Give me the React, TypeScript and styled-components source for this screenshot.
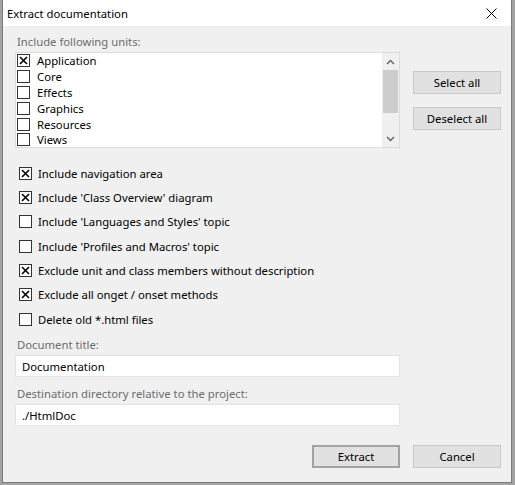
import styled, { createGlobalStyle } from "styled-components";

type CheckProps = { checked: boolean };

const units = [
  { name: "Application", checked: true },
  { name: "Core", checked: false },
  { name: "Effects", checked: false },
  { name: "Graphics", checked: false },
  { name: "Resources", checked: false },
  { name: "Views", checked: false },
];

const options = [
  { label: "Include navigation area", checked: true },
  { label: "Include 'Class Overview' diagram", checked: true },
  { label: "Include 'Languages and Styles' topic", checked: false },
  { label: "Include 'Profiles and Macros' topic", checked: false },
  { label: "Exclude unit and class members without description", checked: true },
  { label: "Exclude all onget / onset methods", checked: true },
  { label: "Delete old *.html files", checked: false },
];

const GlobalStyle = createGlobalStyle`
  html, body {
    margin: 0;
    padding: 0;
    background: #a3a3a3;
  }
  body {
    font-family: "Noto Sans", "Open Sans", sans-serif;
    font-size: 11.3px;
    color: #000;
  }
`;

const Window = styled.div`
  display: flex;
  flex-direction: column;
  width: 510px;
  height: 483px;
  margin-left: 2px;
  box-sizing: border-box;
  border: 1px solid #7c7c7c;
  border-top: none;
  background: #f0f0f0;
`;

const TitleBar = styled.div`
  display: flex;
  align-items: center;
  justify-content: space-between;
  height: 26px;
  padding-left: 4px;
  background: #fff;
`;

const Title = styled.span`
  font-size: 11.3px;
`;

const CloseButton = styled.div`
  display: flex;
  align-items: center;
  justify-content: center;
  width: 46px;
  height: 26px;
  margin-right: -3px;
`;

const Body = styled.div`
  display: flex;
  flex-direction: column;
  flex: 1;
  padding: 8px 10px 0 12px;
`;

const FieldLabel = styled.div<{ $top?: number }>`
  height: 16px;
  line-height: 16px;
  padding-left: 2px;
  margin-top: ${({ $top }) => $top ?? 0}px;
  margin-bottom: 2px;
  color: #6d6d6d;
`;

const TopRow = styled.div`
  display: flex;
  gap: 13px;
`;

const ListBox = styled.div`
  display: flex;
  width: 385px;
  height: 96px;
  box-sizing: border-box;
  border: 1px solid #dcdcdc;
  background: #fff;
  overflow: hidden;
`;

const ListItems = styled.div`
  flex: 1;
  padding: 0 0 0 1px;
`;

const ListRow = styled.div`
  display: flex;
  align-items: center;
  gap: 7px;
  height: 15.8px;
`;

const ScrollBar = styled.div`
  display: flex;
  flex-direction: column;
  width: 17px;
  background: #f0f0f0;
`;

const ScrollArrow = styled.div`
  display: flex;
  align-items: center;
  justify-content: center;
  height: 17px;
`;

const ScrollTrack = styled.div`
  flex: 1;
`;

const ScrollThumb = styled.div`
  height: 43px;
  margin: 0 1px;
  background: #cdcdcd;
`;

const ButtonColumn = styled.div`
  display: flex;
  flex-direction: column;
  gap: 13px;
  padding-top: 19px;
`;

const Button = styled.div<{ $default?: boolean }>`
  display: flex;
  align-items: center;
  justify-content: center;
  width: 88px;
  height: 23px;
  box-sizing: border-box;
  background: #e1e1e1;
  border: ${({ $default }) => ($default ? "2px solid #a2a2a2" : "1px solid #c8c8c8")};
`;

const Options = styled.div`
  display: flex;
  flex-direction: column;
  gap: 8.4px;
  margin-top: 17px;
  padding-left: 4px;
`;

const OptionRow = styled.div`
  display: flex;
  align-items: center;
  gap: 6px;
  height: 16px;
`;

const Box = styled.div<CheckProps>`
  display: flex;
  align-items: center;
  justify-content: center;
  width: 13px;
  height: 13px;
  box-sizing: border-box;
  border: 1px solid #333;
  background: #fff;
  flex-shrink: 0;
`;

const TextInput = styled.div`
  display: flex;
  align-items: center;
  width: 385px;
  height: 22px;
  box-sizing: border-box;
  padding-left: 6px;
  border: 1px solid #e3e3e3;
  background: #fff;
`;

const Footer = styled.div`
  display: flex;
  justify-content: flex-end;
  gap: 13px;
  margin-top: 19px;
`;

function CheckBox({ checked }: CheckProps) {
  return (
    <Box checked={checked}>
      {checked && (
        <svg width="9" height="9" viewBox="0 0 9 9">
          <path d="M1 1 L8 8 M8 1 L1 8" stroke="#000" strokeWidth="1.6" />
        </svg>
      )}
    </Box>
  );
}

function Chevron({ up }: { up: boolean }) {
  return (
    <svg width="9" height="6" viewBox="0 0 9 6">
      <path
        d={up ? "M1 5 L4.5 1.5 L8 5" : "M1 1 L4.5 4.5 L8 1"}
        stroke="#606060"
        strokeWidth="1.4"
        fill="none"
      />
    </svg>
  );
}

export default function App() {
  return (
    <>
      <GlobalStyle />
      <Window>
        <TitleBar>
          <Title>Extract documentation</Title>
          <CloseButton>
            <svg width="11" height="11" viewBox="0 0 11 11">
              <path d="M0.5 0.5 L10.5 10.5 M10.5 0.5 L0.5 10.5" stroke="#000" strokeWidth="1" />
            </svg>
          </CloseButton>
        </TitleBar>
        <Body>
          <FieldLabel>Include following units:</FieldLabel>
          <TopRow>
            <ListBox>
              <ListItems>
                {units.map((u) => (
                  <ListRow key={u.name}>
                    <CheckBox checked={u.checked} />
                    <span>{u.name}</span>
                  </ListRow>
                ))}
              </ListItems>
              <ScrollBar>
                <ScrollArrow>
                  <Chevron up />
                </ScrollArrow>
                <ScrollTrack>
                  <ScrollThumb />
                </ScrollTrack>
                <ScrollArrow>
                  <Chevron up={false} />
                </ScrollArrow>
              </ScrollBar>
            </ListBox>
            <ButtonColumn>
              <Button>Select all</Button>
              <Button>Deselect all</Button>
            </ButtonColumn>
          </TopRow>
          <Options>
            {options.map((o) => (
              <OptionRow key={o.label}>
                <CheckBox checked={o.checked} />
                <span>{o.label}</span>
              </OptionRow>
            ))}
          </Options>
          <FieldLabel $top={10}>Document title:</FieldLabel>
          <TextInput>Documentation</TextInput>
          <FieldLabel $top={9}>Destination directory relative to the project:</FieldLabel>
          <TextInput>./HtmlDoc</TextInput>
          <Footer>
            <Button $default>Extract</Button>
            <Button>Cancel</Button>
          </Footer>
        </Body>
      </Window>
    </>
  );
}
